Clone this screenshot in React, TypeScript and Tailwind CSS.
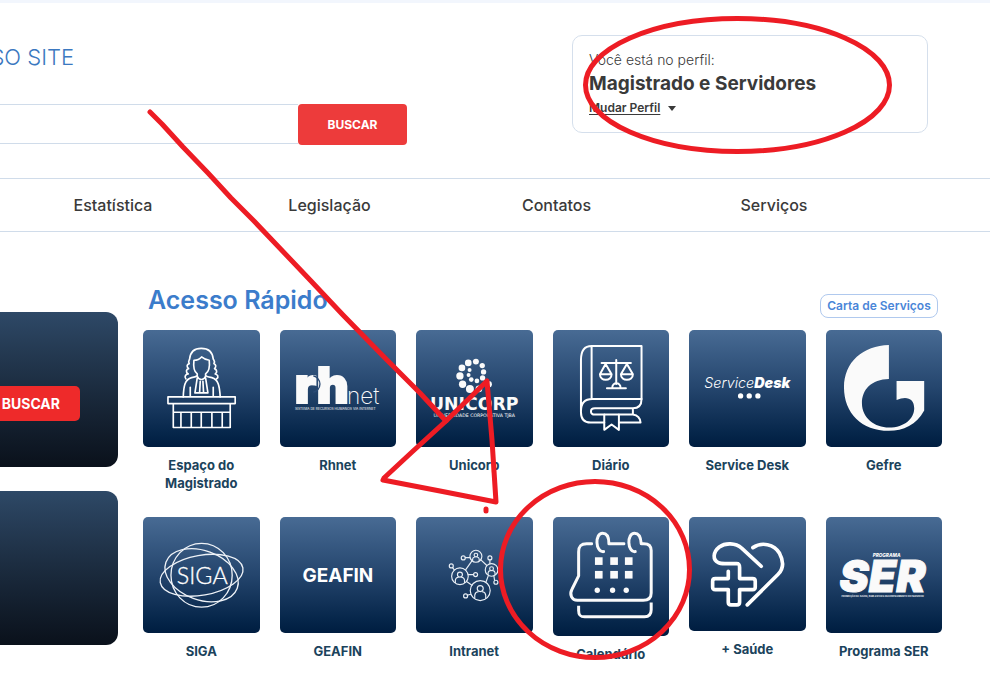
import type { ReactNode } from 'react';

const navItems = ['Estatística', 'Legislação', 'Contatos', 'Serviços'];

const stroke = {
  fill: 'none',
  stroke: '#ffffff',
  strokeLinecap: 'round' as const,
  strokeLinejoin: 'round' as const,
};

function Judge() {
  return (
    <g {...stroke} strokeWidth={5}>
      <path d="M75 201H277V221H75Z M91 221V293H262V221 M91 247H262 M114 247V293 M145 247V293 M175 247V293 M207 247V293 M238 247V293" />
      <path d="M121 201C122 168 126 148 146 143C153 142 160 141 163 137V132C152 124 151 108 153 91C163 91 171 87 176 81C183 87 190 90 199 91C201 108 199 124 188 132V137C192 142 200 142 207 143C226 148 230 168 232 201" />
      <path d="M129 147C122 139 130 132 136 132C127 126 130 118 137 116C129 109 133 103 139 101C134 94 140 90 140 87C142 66 155 55 175 55C196 55 209 66 211 87C212 90 218 94 213 101C219 104 221 110 215 116C222 119 224 127 217 132C224 134 229 140 221 147" />
      <path d="M163 139C168 152 183 152 188 139 M163 144L156 189H195L188 144 M172 154L170 189 M180 154L182 189 M142 172V199 M211 172V199" />
    </g>
  );
}

function Rhnet() {
  return (
    <g fill="#fafafa" className="font-[Inter,sans-serif]">
      <text x="44" y="220" fontSize="148" fontWeight="900" stroke="#fafafa" strokeWidth="6">rh</text>
      <path d="M100 138A25 25 0 0 1 100 187" fill="none" stroke="#2b4b75" strokeWidth="4" />
      <text x="201" y="222" fontSize="68" fontWeight="200">net</text>
      <text x="45" y="239" fontSize="10">SISTEMA DE RECURSOS HUMANOS VIA INTERNET</text>
    </g>
  );
}

const unicorpDots = [
  [138, 114, 10], [157, 99, 10], [180, 95, 9], [199, 107, 8], [203, 126, 8], [200, 144, 8],
  [132, 138, 11], [140, 163, 11], [162, 177, 12], [189, 177, 10], [218, 163, 10],
  [161, 120, 6], [158, 135, 6], [166, 149, 7], [183, 153, 7],
];

function Unicorp() {
  return (
    <g fill="#fafafa" className="font-['DejaVu_Sans',sans-serif]">
      {unicorpDots.map(([x, y, r]) => <circle key={`${x}-${y}`} cx={x} cy={y} r={r} />)}
      <text x="175" y="240" fontSize="52" fontWeight="700" textAnchor="middle">UNICORP</text>
      <text x="175" y="260" fontSize="14" textAnchor="middle">UNIVERSIDADE CORPORATIVA TJBA</text>
    </g>
  );
}

function LawBook() {
  return (
    <g {...stroke} strokeWidth={6} transform="translate(-24 -150)">
      <path d="M290 198H140C116 198 108 215 108 240V397C108 419 119 428 137 428H178 M140 198V357 M290 198V357H142C120 357 108 369 108 393" />
      <path d="M290 357C290 376 281 385 264 385H150C134 385 134 404 150 404H264V385 M264 404C276 406 286 414 287 428H222 M178 403V450L200 434L222 450V403" />
      <path d="M214 240V312 M170 249H258 M182 252L165 283H200Z M246 252L228 283H264Z M165 283C165 305 200 305 200 283 M228 283C228 305 264 305 264 283 M186 325H243 M202 324C202 305 227 305 227 324" />
    </g>
  );
}

function ServiceDesk() {
  return (
    <g fill="#ffffff" className="font-[Inter,sans-serif]">
      <text x="175" y="173" fontSize="43" fontStyle="italic" fontWeight="300" textAnchor="middle">
        Service<tspan fontWeight="900">Desk</tspan>
      </text>
      <circle cx="155" cy="198" r="8" />
      <circle cx="181" cy="198" r="8" />
      <circle cx="207" cy="198" r="8" />
    </g>
  );
}

function Gefre() {
  return (
    <path
      transform="translate(-438 -150)"
      fill="#fafafa"
      d="M627 195V297C575 298 546 328 546 370C546 415 585 443 627 443C675 443 703 415 703 385C703 355 680 347 650 360V303H733V392C710 435 670 453 627 453C545 453 492 400 492 322C492 245 550 197 627 195Z"
    />
  );
}

function Siga() {
  return (
    <g>
      <g fill="none" stroke="#eef2f7" strokeWidth="4">
        <ellipse cx="176" cy="175" rx="92" ry="96" />
        <ellipse cx="176" cy="175" rx="126" ry="60" transform="rotate(-10 176 175)" />
        <ellipse cx="176" cy="175" rx="114" ry="74" transform="rotate(20 176 175)" />
      </g>
      <text x="178" y="202" fontSize="70" fontWeight="300" fill="#ffffff" stroke="#ffffff" strokeWidth="1" textAnchor="middle" className="font-[Lato,sans-serif]">SIGA</text>
    </g>
  );
}

function Geafin() {
  return (
    <text x="174" y="194" fontSize="57" fontWeight="700" fill="#ffffff" textAnchor="middle" className="font-[Inter,sans-serif]">GEAFIN</text>
  );
}

const people = [[618, 229, 18], [665, 270, 19], [570, 289, 25], [631, 332, 30]];
const nodes = [[580, 234], [660, 234], [544, 258], [617, 284], [678, 307], [587, 348]];

function Intranet() {
  return (
    <g {...stroke} stroke="#e8eef5" strokeWidth={3.5} transform="translate(-438 -111)">
      {people.map(([x, y, r]) => (
        <g key={x}>
          <circle cx={x} cy={y} r={r} />
          <circle cx={x} cy={y - r * 0.2} r={r * 0.3} />
          <path d={`M${x - r * 0.55} ${y + r * 0.75}V${y + r * 0.45}Q${x - r * 0.5} ${y + r * 0.15} ${x - r * 0.2} ${y + r * 0.12}M${x + r * 0.55} ${y + r * 0.75}V${y + r * 0.45}Q${x + r * 0.5} ${y + r * 0.15} ${x + r * 0.2} ${y + r * 0.12}`} />
        </g>
      ))}
      {nodes.map(([x, y]) => <circle key={x} cx={x} cy={y} r="6" />)}
      <path d="M586 233H600 M660 240V251 M548 263L553 270 M595 284H611 M674 301L672 288 M592 346L602 343 M606 243L587 270 M633 240L650 256 M590 305L606 316 M655 288L648 307" />
    </g>
  );
}

function CalendarIcon() {
  return (
    <g transform="translate(-189 -141)">
      <g {...stroke} stroke="#fafafa" strokeWidth={9}>
        <path d="M305 221H290C271 221 266 230 266 246V318L246 358C237 375 246 391 262 391H460C477 391 484 383 484 369V242C484 227 477 221 462 221H456" />
        <path d="M341 245C316 247 314 190 338 190C353 190 357 205 357 221H402 M436 245C412 247 410 190 434 190C449 190 453 205 454 221" />
        <path strokeLinecap="butt" d="M266 408V422C266 436 270 441 284 441H464C478 441 484 434 484 420V398" />
      </g>
      <g fill="#fafafa">
        {[315, 361, 405].map((x) => (
          <g key={x}>
            <rect x={x} y="262" width="23" height="23" />
            <rect x={x} y="303" width="23" height="23" />
          </g>
        ))}
        <circle cx="322" cy="361" r="8" />
        <circle cx="368" cy="361" r="8" />
        <circle cx="409" cy="361" r="8" />
      </g>
    </g>
  );
}

function Health() {
  return (
    <g {...stroke} strokeWidth={11} transform="translate(-27 -51)">
      <path d="M244 199L186 145C166 128 136 128 118 141C98 157 98 180 115 188C120 191 125 191 135 191H170C178 191 179 195 179 203V236H218Q226 236 226 244V262Q226 269 218 269H179V307Q179 315 171 315H153Q145 315 145 307V269H106Q98 269 98 262V244Q98 236 106 236H145V214" />
      <path d="M219 143C245 125 283 132 299 160C314 188 308 210 294 224L202 315" />
    </g>
  );
}

function Ser() {
  return (
    <g fill="#fafafa" fontStyle="italic" textAnchor="middle" className="font-[Inter,sans-serif]">
      <text x="182" y="119" fontSize="14" fontWeight="800">PROGRAMA</text>
      <text x="170" y="225" fontSize="132" fontWeight="900" stroke="#fafafa" strokeWidth="3">SER</text>
      <text x="170" y="240" fontSize="7" fontStyle="normal" fontWeight="600">PROMOÇÃO DA SAÚDE, BEM-ESTAR E RECONHECIMENTO DO SERVIDOR</text>
    </g>
  );
}

type Tile = { label: string; art: ReactNode; height?: number };

const tiles: Tile[] = [
  { label: 'Espaço do Magistrado', art: <Judge /> },
  { label: 'Rhnet', art: <Rhnet /> },
  { label: 'Unicorp', art: <Unicorp /> },
  { label: 'Diário', art: <LawBook /> },
  { label: 'Service Desk', art: <ServiceDesk /> },
  { label: 'Gefre', art: <Gefre /> },
  { label: 'SIGA', art: <Siga /> },
  { label: 'GEAFIN', art: <Geafin /> },
  { label: 'Intranet', art: <Intranet /> },
  { label: 'Calendário', art: <CalendarIcon />, height: 360 },
  { label: '+ Saúde', art: <Health />, height: 345 },
  { label: 'Programa SER', art: <Ser /> },
];

function QuickLink({ label, art, height = 350 }: Tile) {
  return (
    <a href="#" className="flex flex-col items-center gap-[9px]">
      <svg
        viewBox={`0 0 350 ${height}`}
        aria-hidden="true"
        className="block w-full rounded-[5px] bg-linear-to-b from-[#486b94] via-[#24456d] to-[#001d40]"
      >
        {art}
      </svg>
      <span className="px-3 text-center text-[13px] leading-[18px] font-bold text-[#1b435c]">{label}</span>
    </a>
  );
}

function Markup() {
  return (
    <svg width="990" height="675" viewBox="0 0 990 675" aria-hidden="true" className="pointer-events-none absolute top-0 left-0">
      <g fill="none" stroke="#ed1c24" strokeWidth="5" strokeLinecap="round" strokeLinejoin="round">
        <ellipse cx="737.5" cy="85" rx="152" ry="66.5" />
        <ellipse cx="595" cy="569.5" rx="94.5" ry="88" />
        <path d="M150 112L162 124L183 147L208 173L231 198L254 221L311 281L343 315L387 360L420 393L446 421" />
        <path d="M487 381L446 421L412 452L384 478L383 480L440 491L496 502L492 440L487 381" />
        <path d="M486 509V511" />
      </g>
    </svg>
  );
}

export default function App() {
  return (
    <div className="relative min-h-screen overflow-hidden bg-white font-[Inter,sans-serif] text-[#3a3a3a]">
      <div className="h-[3px] bg-[#f2f6fd]" />
      <header className="flex items-start justify-between pt-8 pr-[62px] pb-[33px]">
        <div className="flex flex-col gap-8">
          <label htmlFor="site-search" className="flex h-[37px] w-[74px] items-center justify-end overflow-hidden pt-2 text-[22px] font-light whitespace-nowrap text-[#3b78c0]">
            SO SITE
          </label>
          <form className="flex items-start">
            <input id="site-search" type="search" className="h-10 w-[298px] border-y border-[#d0dcea] bg-white px-3 text-sm outline-none" />
            <button type="button" className="h-[41px] w-[109px] rounded bg-[#ed3b3b] text-xs font-bold text-white">BUSCAR</button>
          </form>
        </div>
        <section className="h-[98px] w-[356px] rounded-[10px] border border-[#d5dfec] px-4 pt-4">
          <p className="text-[14px] leading-4 font-light">Você está no perfil:</p>
          <h2 className="pt-1 text-[19px] leading-6 font-bold">Magistrado e Servidores</h2>
          <button type="button" className="flex items-center gap-2 pt-1 text-xs leading-4 font-semibold">
            <span className="underline underline-offset-2">Mudar Perfil</span>
            <svg width="8" height="5" viewBox="0 0 8 5" fill="currentColor" aria-hidden="true"><path d="M0 0H8L4 5Z" /></svg>
          </button>
        </section>
      </header>
      <nav className="grid h-[54px] grid-cols-[216fr_217fr_237fr_198fr] items-center border-y border-[#d0dcea] pr-[117px] pl-[5px] text-center text-base font-medium">
        {navItems.map((item) => <a key={item} href="#">{item}</a>)}
      </nav>
      <main className="flex items-start gap-[25px] pt-[53px] pr-12">
        <aside className="flex w-[118px] shrink-0 flex-col gap-6 pt-[27px]">
          <div className="h-[155px] rounded-r-xl bg-linear-to-b from-[#2e4967] to-[#0a111b] pt-[74px]">
            <button type="button" className="h-[35px] w-20 rounded-r-[5px] bg-[#ee2a2a] pr-5 text-right text-[14px] font-bold text-white">BUSCAR</button>
          </div>
          <div className="h-[154px] rounded-r-xl bg-linear-to-b from-[#2e4967] to-[#0a111b]" />
        </aside>
        <section className="min-w-0 flex-1">
          <div className="flex h-[45px] items-start justify-between pr-1 pl-[5px]">
            <h1 className="text-[25px] leading-[30px] font-semibold text-[#3b7ccb]">Acesso Rápido</h1>
            <button type="button" className="mt-[9px] h-6 w-[118px] rounded-lg border border-[#b0c9ee] text-xs font-semibold text-[#4a86d8]">Carta de Serviços</button>
          </div>
          <div className="grid grid-cols-6 items-start gap-x-5 gap-y-[25px]">
            {tiles.map((tile) => <QuickLink key={tile.label} {...tile} />)}
          </div>
        </section>
      </main>
      <Markup />
    </div>
  );
}
